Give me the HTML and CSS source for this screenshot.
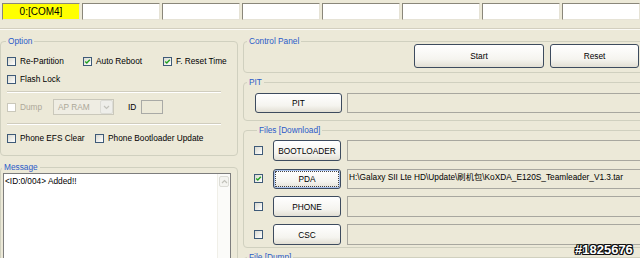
FILE: index.html
```html
<!DOCTYPE html>
<html lang="en">

<head>
    <meta charset="UTF-8">
    <title>Odin3</title>
    <link rel="stylesheet" href="styles.css">
</head>

<body>
    <div class="ports">
        <div class="port active">0:[COM4]</div>
        <div class="port"></div>
        <div class="port"></div>
        <div class="port"></div>
        <div class="port"></div>
        <div class="port"></div>
        <div class="port"></div>
        <div class="port"></div>
    </div>

    <div class="main">
        <div class="col-left">
            <fieldset class="group option">
                <legend>Option</legend>
                <div class="row">
                    <label class="chk w76"><span class="box"></span>Re-Partition</label>
                    <label class="chk w80"><span class="box on"><svg viewBox="0 0 7 7"><path d="M1.2 3.4l1.6 1.6 3-3.2"/></svg></span>Auto Reboot</label>
                    <label class="chk"><span class="box on"><svg viewBox="0 0 7 7"><path d="M1.2 3.4l1.6 1.6 3-3.2"/></svg></span>F. Reset Time</label>
                </div>
                <div class="row">
                    <label class="chk"><span class="box"></span>Flash Lock</label>
                </div>
                <div class="sep"></div>
                <div class="row dump">
                    <label class="chk off w46"><span class="box"></span>Dump</label>
                    <div class="select">AP RAM<span class="drop"><svg viewBox="0 0 7 5"><path d="M1 1l2.5 2.5 2.5-2.5"/></svg></span></div>
                    <span class="id-label">ID</span>
                    <div class="id-box"></div>
                </div>
                <div class="sep low"></div>
                <div class="row">
                    <label class="chk w88"><span class="box"></span>Phone EFS Clear</label>
                    <label class="chk"><span class="box"></span>Phone Bootloader Update</label>
                </div>
            </fieldset>

            <fieldset class="group message">
                <legend>Message</legend>
                <div class="log">
                    <div class="log-text">&lt;ID:0/004&gt; Added!!</div>
                    <div class="scroll"><span class="up"><svg viewBox="0 0 7 5"><path d="M1 4l2.5-2.5 2.5 2.5"/></svg></span></div>
                </div>
            </fieldset>
        </div>

        <div class="col-right">
            <fieldset class="group">
                <legend>Control Panel</legend>
                <div class="cp-buttons">
                    <button class="btn start">Start</button>
                    <button class="btn reset">Reset</button>
                </div>
            </fieldset>

            <fieldset class="group">
                <legend>PIT</legend>
                <div class="pit-row">
                    <button class="btn pit">PIT</button>
                    <div class="field"></div>
                </div>
            </fieldset>

            <fieldset class="group files">
                <legend>Files [Download]</legend>
                <div class="file-row">
                    <span class="box"></span>
                    <button class="btn file">BOOTLOADER</button>
                    <div class="field"></div>
                </div>
                <div class="file-row">
                    <span class="box on"><svg viewBox="0 0 7 7"><path d="M1.2 3.4l1.6 1.6 3-3.2"/></svg></span>
                    <button class="btn file focus">PDA</button>
                    <div class="field">H:\Galaxy SII Lte HD\Update\刷机包\KoXDA_E120S_Teamleader_V1.3.tar</div>
                </div>
                <div class="file-row">
                    <span class="box"></span>
                    <button class="btn file">PHONE</button>
                    <div class="field"></div>
                </div>
                <div class="file-row">
                    <span class="box"></span>
                    <button class="btn file">CSC</button>
                    <div class="field"></div>
                </div>
            </fieldset>

            <fieldset class="group dumpfile">
                <legend>File [Dump]</legend>
                <div class="file-row"></div>
            </fieldset>
        </div>
    </div>

    <div class="stamp">#1825676</div>
</body>

</html>
```

FILE: styles.css
```css
html,body,div,fieldset,legend,label,button{margin:0;padding:0;}
body{position: relative;width: 640px;height: 258px;overflow: hidden;background: #ece9d8;font: 8.3px/10px "Liberation Sans", "Noto Sans CJK SC", sans-serif;color: #000;}

/* port slots */
.ports{display: flex;gap: 2px;height: 25px;padding: 3px 0 0 2px;border-bottom: 1px solid #d3cfbf;box-shadow: 0 1px 0 #fbfaf5;}
.port{flex: none;box-sizing: border-box;width: 78px;height: 17px;background: #fff;border: 1px solid;border-color: #8a877a #e6e3d6 #e6e3d6 #8a877a;text-align: center;line-height: 15px;font-size: 10px;}
.port.active{background: #ffff00;}

.main{display: flex;padding-top: 7px;}
.col-left{flex: none;width: 238px;display: flex;flex-direction: column;gap: 6px;}
.col-right{flex: none;width: 405px;margin-left: 5px;display: flex;flex-direction: column;gap: 4px;}

/* group boxes */
.group{min-width: 0;border: 1px solid #d0d0bf;border-radius: 4px;}
.group legend{padding: 0 2px;margin-left: 3px;line-height: 10px;color: #2b5bc8;}
.col-left .group legend{margin-left: -1px;}

/* checkboxes */
.row{display: flex;align-items: center;height: 16px;}
.row + .row{margin-top: 2px;}
.chk{display: flex;align-items: center;gap: 4px;flex: none;}
.w46{width: 46px;}
.w76{width: 76px;}
.w80{width: 80px;}
.w88{width: 88px;}
.box{flex: none;box-sizing: border-box;width: 9px;height: 9px;border: 1px solid #3e5a78;background: linear-gradient(135deg, #d9d9d0, #ffffff);}
.box svg{display: block;width: 7px;height: 7px;}
.box path{fill: none;stroke: #21a121;stroke-width: 1.4;}
.chk.off{color: #aca899;}
.chk.off .box{border-color: #cac8bb;background: #fff;}

.option{padding: 7px 0 9px 6px;}
.sep{height: 0;border-top: 1px solid #d0cdbe;border-bottom: 1px solid #fff;margin: 4px 16px 6px 0;}
.sep.low{margin-top: 8px;margin-bottom: 5px;}

.select{display: flex;align-items: center;justify-content: space-between;box-sizing: border-box;width: 61px;height: 16px;padding-left: 4px;border: 1px solid #cac8bb;background: #efede3;color: #aca899;}
.drop{box-sizing: border-box;width: 13px;height: 14px;border: 1px solid #dcdcd6;border-radius: 2px;background: #eeeeea;display: flex;align-items: center;justify-content: center;}
.drop svg{width: 7px;height: 5px;}
.drop path,.up path{fill: none;stroke: #c2c2bb;stroke-width: 1.2;}
.id-label{margin-left: 14px;}
.id-box{box-sizing: border-box;width: 22px;height: 14px;margin-left: 5px;border: 1px solid #a9aaa6;background: #ece9d8;}

/* message log */
.message{padding: 1px 6px 0 2px;}
.log{display: flex;height: 100px;border: 1px solid #7d7d7d;background: #fff;}
.log-text{flex: 1;padding: 2px 1px;}
.scroll{flex: none;width: 11px;padding: 2px 0 0 1px;border-left: 1px solid #f0efe8;background: #fbfbf9;}
.up{display: flex;align-items: center;justify-content: center;box-sizing: border-box;width: 10px;height: 11px;border: 1px solid #dcdcd6;border-radius: 2px;background: #f4f4f0;}
.up svg{width: 7px;height: 5px;}

/* buttons and fields */
.btn{flex: none;box-sizing: border-box;display: flex;align-items: center;justify-content: center;border: 1px solid #3d4b5e;border-radius: 3px;background: linear-gradient(#ffffff, #f5f4ef 65%, #e2dfd4);font: inherit;color: #000;}
.btn.focus{box-shadow: inset 0 0 0 1px #a9c2ee;outline: 1px dotted #444;outline-offset: -3px;}
.field{flex: 1;box-sizing: border-box;height: 21px;padding: 2px 1px;border: 1px solid #a8a79f;background: #ece9d8;white-space: nowrap;overflow: hidden;}

.cp-buttons{display: flex;gap: 6px;margin-top: -2px;padding: 0 0 4px 170px;}
.start{width: 130px;height: 24px;}
.reset{width: 89px;height: 24px;}

.pit-row{display: flex;gap: 5px;padding: 6px 0 7px 11px;}
.pit{width: 87px;height: 20px;}
.pit-row .field{height: 20px;}

.files{padding: 5px 0 2px 10px;}
.file-row{display: flex;align-items: center;height: 21px;}
.file-row + .file-row{margin-top: 7px;}
.file-row .box{margin-right: 10px;}
.file{width: 68px;height: 21px;margin-right: 6px;}
.files .file-row:nth-child(3) .btn,.files .file-row:nth-child(3) .field{height: 20px;}

/* watermark */
.stamp{position: absolute;left: 575px;top: 243px;font: bold 13px/13px "Liberation Sans", sans-serif;color: #fff;text-shadow: 1px 0 0 #111, -1px 0 0 #111, 0 1px 0 #111, 0 -1px 0 #111, 1px 1px 0 #111, -1px -1px 0 #111, 1px -1px 0 #111, -1px 1px 0 #111;}
```
